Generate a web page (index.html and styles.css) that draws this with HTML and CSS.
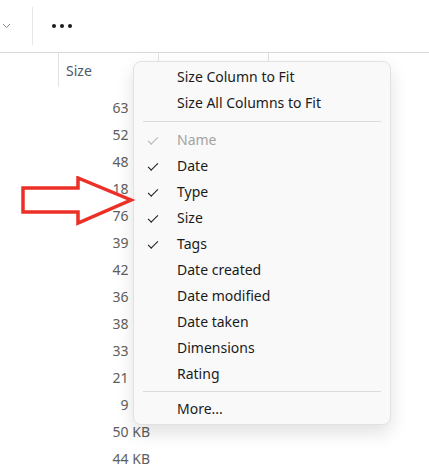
FILE: index.html
```html
<!DOCTYPE html>
<html>

<head>
  <meta charset="utf-8">
  <title>Columns</title>
  <link rel="stylesheet" href="styles.css">
</head>

<body>
  <main class="explorer">
    <div class="toolbar">
      <span class="chevron">
        <svg width="9" height="6" viewBox="0 0 9 6"><path d="M1 1 L4.5 4.5 L8 1" fill="none" stroke="#8a8a8a" stroke-width="1"/></svg>
      </span>
      <span class="tb-sep"></span>
      <span class="dots">
        <svg width="22" height="6" viewBox="0 0 22 6"><circle cx="3" cy="3" r="2" fill="#1b1b1b"/><circle cx="11" cy="3" r="2" fill="#1b1b1b"/><circle cx="19" cy="3" r="2" fill="#1b1b1b"/></svg>
      </span>
    </div>

    <div class="header">
      <div class="col col-first"></div>
      <div class="col col-size">Size</div>
      <div class="col col-next"></div>
      <div class="col col-rest"></div>
    </div>

    <div class="rows">
      <div class="row">63 KB</div>
      <div class="row">52 KB</div>
      <div class="row">48 KB</div>
      <div class="row">18 KB</div>
      <div class="row">76 KB</div>
      <div class="row">39 KB</div>
      <div class="row">42 KB</div>
      <div class="row">36 KB</div>
      <div class="row">38 KB</div>
      <div class="row">33 KB</div>
      <div class="row">21 KB</div>
      <div class="row">9 KB</div>
      <div class="row">50 KB</div>
      <div class="row">44 KB</div>
    </div>

    <!-- context menu over the list -->
    <ul class="menu">
      <li class="item">Size Column to Fit</li>
      <li class="item">Size All Columns to Fit</li>
      <li class="sep"></li>
      <li class="item disabled checked">Name</li>
      <li class="item checked">Date</li>
      <li class="item checked">Type</li>
      <li class="item checked">Size</li>
      <li class="item checked">Tags</li>
      <li class="item">Date created</li>
      <li class="item">Date modified</li>
      <li class="item">Date taken</li>
      <li class="item">Dimensions</li>
      <li class="item">Rating</li>
      <li class="sep sep-low"></li>
      <li class="item">More...</li>
    </ul>

    <svg class="arrow" width="116" height="52" viewBox="0 0 116 52">
      <path d="M2 12 L57 12 L57 2 L110 24 L57 47 L57 36 L2 36 Z" fill="none" stroke="#ec3028" stroke-width="3.5" stroke-linejoin="miter"/>
    </svg>
  </main>
</body>

</html>
```

FILE: styles.css
```css
body {
  margin: 0;
  background-color: #fff;
  font-family: "Segoe UI", "Noto Sans", sans-serif;
  font-size: 14px;
  color: #1b1b1b;
}

.explorer {
  position: relative;
  height: 467px;
  overflow: hidden;
}

.toolbar {
  display: flex;
  align-items: center;
  height: 53px;
  border-bottom: 1px solid #d9d9d9;
  box-sizing: border-box;
}

.chevron {
  display: flex;
  margin-left: 2px;
  width: 30px;
}

.tb-sep {
  width: 1px;
  height: 38px;
  background-color: #e6e6e6;
}

.dots {
  display: flex;
  margin-left: 18px;
}

.header {
  display: flex;
  height: 34px;
}

.col {
  border-left: 1px solid #e3e3e3;
  box-sizing: border-box;
}

.col-first {
  width: 58px;
  border-left: none;
}

.col-size {
  width: 100px;
  padding: 8px 0 0 7px;
  color: #4d5868;
}

.col-next {
  width: 110px;
}

.col-rest {
  flex: 1;
}

.rows {
  padding-top: 7px;
  width: 150px;
}

.row {
  height: 27px;
  line-height: 27px;
  text-align: right;
  color: #5e5e5e;
}

.menu {
  position: absolute;
  left: 133px;
  top: 61px;
  width: 258px;
  margin: 0;
  padding: 2px 0;
  list-style: none;
  background-color: #f9f9f9;
  border: 1px solid #e2e2e2;
  border-radius: 8px;
  box-sizing: border-box;
  box-shadow: 0 8px 18px rgba(0, 0, 0, 0.12);
}

.item {
  position: relative;
  height: 26px;
  line-height: 26px;
  padding-left: 43px;
}

.checked::before {
  content: "";
  position: absolute;
  left: 14px;
  top: 10px;
  width: 9px;
  height: 4px;
  border-left: 1px solid #1b1b1b;
  border-bottom: 1px solid #1b1b1b;
  transform: rotate(-45deg);
}

.disabled {
  color: #a3a3a3;
}

.disabled::before {
  border-color: #b5b5b5;
}

.sep {
  height: 1px;
  margin: 5px 9px 5px 9px;
  background-color: #dcdcdc;
}

.sep-low {
  margin: 4px 9px 4px 9px;
}

.arrow {
  position: absolute;
  left: 21px;
  top: 176px;
}
```
